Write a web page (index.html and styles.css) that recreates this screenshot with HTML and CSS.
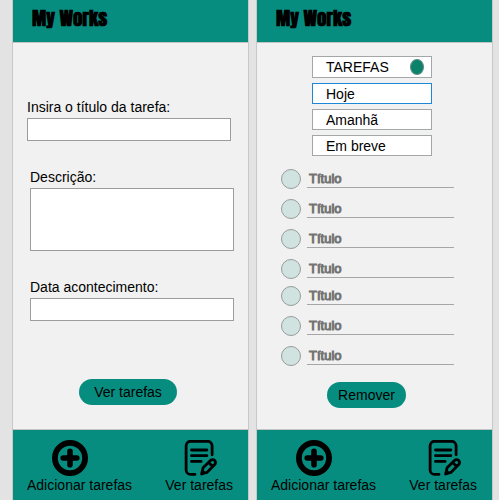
FILE: index.html
```html
<!DOCTYPE html>
<html lang="pt-BR">
<head>
<meta charset="utf-8">
<meta name="viewport" content="width=device-width, initial-scale=1">
<title>My Works</title>
<link rel="stylesheet" href="styles.css">
</head>
<body>
<svg class="sprite" aria-hidden="true">
  <symbol id="icon-add" viewBox="0 0 36 36">
    <circle cx="18" cy="18" r="15.1" fill="none" stroke="#000" stroke-width="5.8"/>
    <path d="M18 11.2v13.6M11.2 18h13.6" fill="none" stroke="#000" stroke-width="5.6" stroke-linecap="round"/>
  </symbol>
  <symbol id="icon-note" viewBox="0 0 36 36">
    <g fill="none" stroke="#000" stroke-width="2.8" stroke-linecap="round" stroke-linejoin="round">
      <path d="M12 34.4H7.6a4.5 4.5 0 0 1-4.5-4.5V5.8a4.5 4.5 0 0 1 4.5-4.5h17a4.5 4.5 0 0 1 4.5 4.5v9"/>
      <path d="M8.5 10h15.4M8.5 15.7h15.4M8.5 21.4h9.6"/>
      <path d="M18.6 34l1.5-6.2 7.4-7.4a2.9 2.9 0 0 1 4.2 4.2l-7.8 7.8zM25.6 22.4l3.8 3.8"/>
    </g>
    <path d="M18 34.8l1.4-5.8 4 4z"/>
  </symbol>
</svg>
<main class="board">
  <section class="screen">
    <header class="bar"><h1>My Works</h1></header>
    <form class="task-form">
      <div class="field">
        <label for="titulo">Insira o título da tarefa:</label>
        <input id="titulo" type="text">
      </div>
      <div class="field inset">
        <label for="descricao">Descrição:</label>
        <textarea id="descricao"></textarea>
      </div>
      <div class="field inset">
        <label for="data">Data acontecimento:</label>
        <input id="data" type="text">
      </div>
      <button class="pill" type="button">Ver tarefas</button>
    </form>
    <nav class="tabs">
      <a class="add" href="#"><svg><use href="#icon-add"/></svg>Adicionar tarefas</a>
      <a class="view" href="#"><svg><use href="#icon-note"/></svg>Ver tarefas</a>
    </nav>
  </section>

  <section class="screen">
    <header class="bar"><h1>My Works</h1></header>
    <div class="tasks">
      <div class="menu">
        <button class="toggle" type="button">TAREFAS<span class="dot"></span></button>
        <button class="active" type="button">Hoje</button>
        <button type="button">Amanhã</button>
        <button type="button">Em breve</button>
      </div>
      <ul class="list">
        <li><input id="t1" type="checkbox"><label for="t1">Título</label></li>
        <li><input id="t2" type="checkbox"><label for="t2">Título</label></li>
        <li><input id="t3" type="checkbox"><label for="t3">Título</label></li>
        <li><input id="t4" type="checkbox"><label for="t4">Título</label></li>
      </ul>
      <ul class="list">
        <li><input id="t5" type="checkbox"><label for="t5">Título</label></li>
        <li><input id="t6" type="checkbox"><label for="t6">Título</label></li>
        <li><input id="t7" type="checkbox"><label for="t7">Título</label></li>
      </ul>
      <button class="pill small" type="button">Remover</button>
    </div>
    <nav class="tabs">
      <a class="add" href="#"><svg><use href="#icon-add"/></svg>Adicionar tarefas</a>
      <a class="view" href="#"><svg><use href="#icon-note"/></svg>Ver tarefas</a>
    </nav>
  </section>
</main>
</body>
</html>
```

FILE: styles.css
```css
* { box-sizing: border-box; }

body {
  margin: 0;
  background: #e3e3e3;
  color: #000;
  font: 14px/16px "Liberation Sans", Arial, sans-serif;
}

button, input, textarea { font: inherit; color: inherit; }

.sprite { display: none; }

.board {
  display: flex;
  gap: 7px;
  min-height: 100vh;
  padding: 0 6px 0 12px;
}

.screen {
  flex: 1;
  min-width: 0;
  display: flex;
  flex-direction: column;
  background: #f1f1f1;
  border: solid #c8c8c8;
  border-width: 0 1px;
}

.bar {
  padding: 6px 19px 12px;
  background: #078d7f;
  border-bottom: 1px solid #c4c4c4;
}

.bar h1 {
  margin: 0;
  font: 900 19px/24px Impact, Anton, "Roboto Condensed", "Open Sans Condensed", Roboto, sans-serif;
}

.task-form {
  flex: 1;
  display: flex;
  flex-direction: column;
  padding: 56px 14px 24px;
}

.field {
  display: flex;
  flex-direction: column;
  gap: 3px;
  margin: 0 3px 28px 0;
}

.field.inset { margin: 0 0 28px 3px; }

.field input,
.field textarea {
  width: 100%;
  height: 23px;
  margin: 0;
  padding: 2px 4px;
  background: #fff;
  border: 1px solid #9c9c9c;
  border-radius: 0;
  resize: none;
}

.field textarea { height: 63px; }

.pill {
  align-self: center;
  margin-top: auto;
  padding: 5px 15px;
  background: #078d7f;
  border: 0;
  border-radius: 13px;
}

.task-form .pill { margin-right: 5px; }

.pill.small { padding: 5px 11px; margin-right: 16px; }

.tasks {
  flex: 1;
  display: flex;
  flex-direction: column;
  padding: 13px 0 21px;
}

.menu {
  display: flex;
  flex-direction: column;
  gap: 5px;
  width: 120px;
  margin: 0 0 13px 55px;
}

.menu button {
  height: 21px;
  padding: 0 7px 0 13px;
  text-align: left;
  background: #fff;
  border: 1px solid #a3a7a7;
}

.menu .toggle {
  height: 22px;
  display: flex;
  align-items: center;
  justify-content: space-between;
}

.menu .active { border-color: #1e88d8; }

.dot {
  width: 14px;
  height: 16px;
  background: #0b8269;
  border: 1px solid #5f8f84;
  border-radius: 50%;
}

.list {
  display: flex;
  flex-direction: column;
  gap: 10px;
  margin: 0 38px 7px 24px;
  padding: 0;
  list-style: none;
}

.list li { display: flex; gap: 6px; }

.list input {
  appearance: none;
  width: 20px;
  height: 20px;
  margin: 0;
  background: #d0e3e0;
  border: 1px solid #979c9b;
  border-radius: 50%;
}

.list input:checked { background: #078d7f; }

.list label {
  flex: 1;
  height: 19px;
  padding: 2px 2px 0;
  color: #737373;
  font-size: 13px;
  -webkit-text-stroke: 1px #737373;
  border-bottom: 1px solid #a6a6a6;
}

.tabs {
  display: flex;
  justify-content: space-between;
  padding: 10px 15px 7px 14px;
  background: #078d7f;
  border-top: 1px solid #c4c4c4;
}

.tabs a {
  display: flex;
  flex-direction: column;
  align-items: center;
  gap: 1px;
  color: inherit;
  text-decoration: none;
}

.tabs svg { width: 36px; height: 36px; }

.tabs .add svg { margin-right: 20px; }

.tabs .view svg { margin-left: 4px; }
```
